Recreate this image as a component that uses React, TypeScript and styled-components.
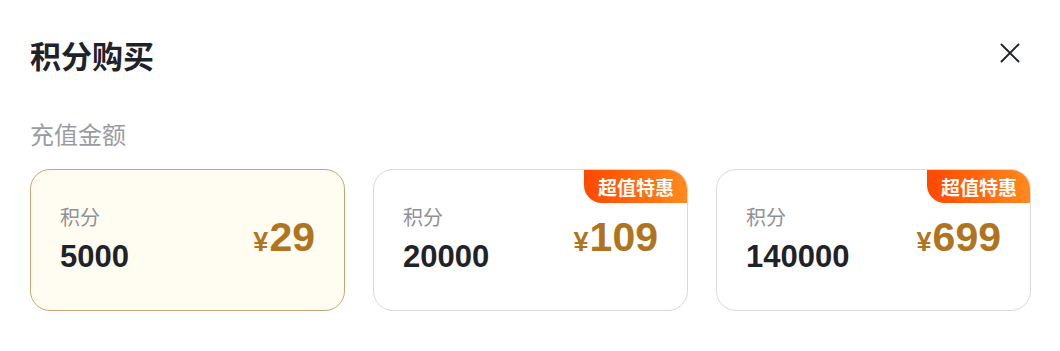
import React, { useState } from "react";
import styled, { createGlobalStyle } from "styled-components";

const GlobalStyle = createGlobalStyle`
  html, body {
    margin: 0;
    padding: 0;
    background: #fff;
    font-family: "Liberation Sans", Arial, "Noto Sans CJK SC", sans-serif;
  }
  * { box-sizing: border-box; }
`;

const packages = [
  { points: "5000", price: "29", hot: false },
  { points: "20000", price: "109", hot: true },
  { points: "140000", price: "699", hot: true },
];

export default function App() {
  const [selected, setSelected] = useState(0);

  return (
    <>
      <GlobalStyle />
      <Dialog>
        <Header>
          <Title>积分购买</Title>
          <CloseButton aria-label="close">
            <svg width="20" height="20" viewBox="0 0 20 20" fill="none">
              <path d="M1.5 1.5L18.5 18.5M18.5 1.5L1.5 18.5" stroke="#1f2329" strokeWidth="1.9" strokeLinecap="round" />
            </svg>
          </CloseButton>
        </Header>
        <SectionLabel>充值金额</SectionLabel>
        <CardGrid>
          {packages.map((p, i) => (
            <Card key={p.points} $active={selected === i} onClick={() => setSelected(i)}>
              {p.hot && <Badge>超值特惠</Badge>}
              <PointsBlock>
                <PointsLabel>积分</PointsLabel>
                <PointsValue>{p.points}</PointsValue>
              </PointsBlock>
              <Price>
                <Currency>¥</Currency>
                {p.price}
              </Price>
            </Card>
          ))}
        </CardGrid>
      </Dialog>
    </>
  );
}

const Dialog = styled.div`
  width: 1060px;
  height: 351px;
  padding: 37px 29px 0 30px;
  background: #fff;
`;

const Header = styled.div`
  display: flex;
  align-items: center;
  justify-content: space-between;
  height: 36px;
`;

const Title = styled.h1`
  margin: 0;
  font-size: 31px;
  line-height: 36px;
  font-weight: 700;
  color: #1f2329;
  font-family: "Noto Sans CJK SC", sans-serif;
`;

const CloseButton = styled.button`
  display: flex;
  align-items: center;
  justify-content: center;
  width: 20px;
  height: 20px;
  padding: 0;
  margin-right: 11px;
  margin-top: -4px;
  border: none;
  background: none;
  cursor: pointer;
`;

const SectionLabel = styled.div`
  margin-top: 46px;
  font-size: 24px;
  line-height: 30px;
  color: #9a9ca1;
  font-family: "Noto Sans CJK SC", sans-serif;
`;

const CardGrid = styled.div`
  display: grid;
  grid-template-columns: repeat(3, 1fr);
  gap: 28px;
  margin-top: 20px;
`;

const Card = styled.div<{ $active: boolean }>`
  position: relative;
  display: flex;
  align-items: center;
  justify-content: space-between;
  height: 142px;
  padding: 0 29px 0 29px;
  border-radius: 20px;
  border: 1px solid ${(p) => (p.$active ? "#c9a574" : "#d9d9d9")};
  background: ${(p) => (p.$active ? "#fffdf1" : "#fff")};
  overflow: hidden;
  cursor: pointer;
`;

const Badge = styled.div`
  position: absolute;
  top: -1px;
  right: -1px;
  height: 34px;
  padding: 0 14px 0 14px;
  display: flex;
  align-items: center;
  border-radius: 0 20px 0 18px;
  background: linear-gradient(90deg, #ff4800 0%, #ff8a1f 100%);
  color: #fff;
  font-size: 19px;
  font-weight: 700;
  font-family: "Noto Sans CJK SC", sans-serif;
`;

const PointsBlock = styled.div`
  display: flex;
  flex-direction: column;
  gap: 9px;
  margin-top: -2px;
`;

const PointsLabel = styled.div`
  font-size: 20px;
  line-height: 26px;
  color: #8f9196;
  font-family: "Noto Sans CJK SC", sans-serif;
`;

const PointsValue = styled.div`
  font-size: 31px;
  line-height: 36px;
  font-weight: 700;
  color: #1f2329;
`;

const Price = styled.div`
  display: flex;
  align-items: baseline;
  font-size: 41px;
  line-height: 1;
  font-weight: 700;
  color: #b0741f;
  margin-top: -6px;
`;

const Currency = styled.span`
  font-size: 27px;
  margin-right: 1px;
`;
